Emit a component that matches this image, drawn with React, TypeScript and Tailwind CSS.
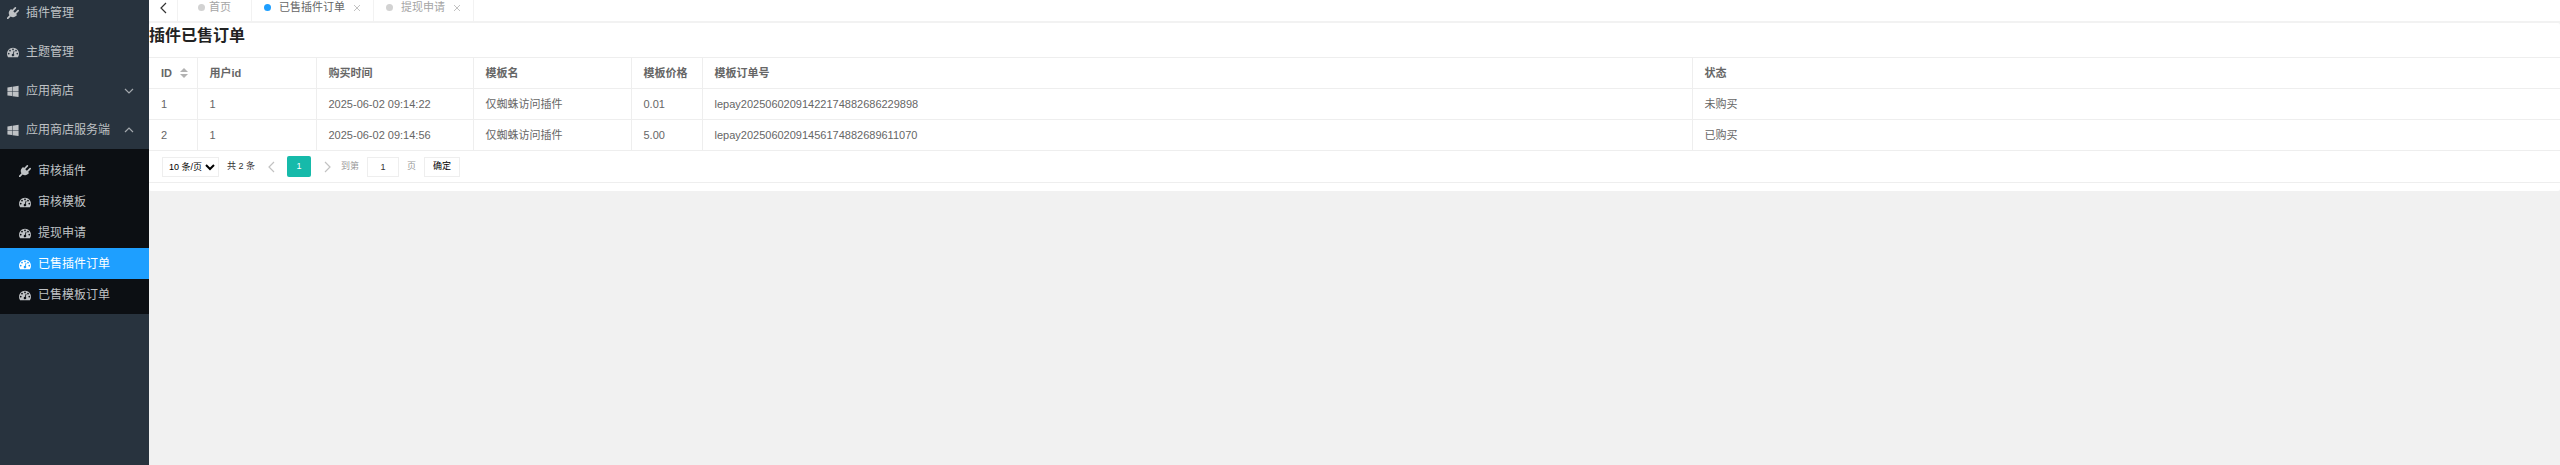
import { useState } from 'react';
import type { ReactNode } from 'react';

type IconName = 'plug' | 'gauge' | 'windows';

interface MenuItem {
  title: string;
  icon: IconName;
  arrow?: 'up' | 'down';
}

interface Order {
  id: number;
  userId: number;
  time: string;
  name: string;
  price: string;
  orderNo: string;
  status: string;
}

const MENU: MenuItem[] = [
  { title: '插件管理', icon: 'plug' },
  { title: '主题管理', icon: 'gauge' },
  { title: '应用商店', icon: 'windows', arrow: 'down' },
  { title: '应用商店服务端', icon: 'windows', arrow: 'up' },
];

const SUBMENU: MenuItem[] = [
  { title: '审核插件', icon: 'plug' },
  { title: '审核模板', icon: 'gauge' },
  { title: '提现申请', icon: 'gauge' },
  { title: '已售插件订单', icon: 'gauge' },
  { title: '已售模板订单', icon: 'gauge' },
];

const ORDERS: Order[] = [
  {
    id: 1,
    userId: 1,
    time: '2025-06-02 09:14:22',
    name: '仅蜘蛛访问插件',
    price: '0.01',
    orderNo: 'lepay20250602091422174882686229898',
    status: '未购买',
  },
  {
    id: 2,
    userId: 1,
    time: '2025-06-02 09:14:56',
    name: '仅蜘蛛访问插件',
    price: '5.00',
    orderNo: 'lepay20250602091456174882689611070',
    status: '已购买',
  },
];

// Font Awesome 4 shapes, drawn on the font's 1792 grid
function MenuIcon({ name }: { name: IconName }) {
  if (name === 'plug') {
    return (
      <svg viewBox="0 0 1792 1792" className="size-3 shrink-0" fill="currentColor" aria-hidden="true">
        <path d="M1755 453q37 38 37 90.500t-37 90.500l-401 400 150 150-160 160q-163 163-389.500 186.500t-411.500-100.500l-362 362h-181v-181l362-362q-124-185-100.500-411.500t186.500-389.500l160-160 150 150 400-401q38-37 91-37t90 37 37 90.500-37 90.500l-400 401 234 234 401-400q38-37 91-37t90 37z" />
      </svg>
    );
  }
  if (name === 'gauge') {
    return (
      <svg viewBox="0 0 1792 1792" className="size-3 shrink-0" fill="currentColor" aria-hidden="true">
        <path d="M384 1152q0-53-37.500-90.500t-90.500-37.500-90.500 37.500-37.500 90.500 37.500 90.500 90.500 37.500 90.500-37.500 37.500-90.500zm192-448q0-53-37.500-90.500t-90.500-37.500-90.500 37.500-37.500 90.500 37.500 90.500 90.500 37.500 90.500-37.500 37.500-90.500zm428 481l101-382q6-26-7.500-48.500t-38.500-29.500-48 6.500-30 39.500l-101 382q-60 5-107 43.500t-63 98.500q-20 77 20 146t117 89 146-20 89-117q16-60-6-117t-72-91zm660-33q0-53-37.500-90.500t-90.500-37.500-90.500 37.500-37.500 90.500 37.500 90.500 90.500 37.500 90.500-37.500 37.500-90.500zm-640-640q0-53-37.500-90.500t-90.500-37.500-90.500 37.500-37.500 90.500 37.500 90.500 90.500 37.500 90.500-37.500 37.500-90.500zm448 192q0-53-37.500-90.500t-90.500-37.500-90.500 37.500-37.500 90.500 37.500 90.500 90.500 37.500 90.500-37.500 37.500-90.500zm320 448q0 261-141 483-19 29-54 29h-1402q-35 0-54-29-141-221-141-483 0-182 71-348t191-286 286-191 348-71 348 71 286 191 191 286 71 348z" />
      </svg>
    );
  }
  return (
    <svg viewBox="0 0 1792 1792" className="size-3 shrink-0" fill="currentColor" aria-hidden="true">
      <path d="M746 1006v651l-682-94v-557h682zm0-743v659h-682v-565zm982 743v786l-907-125v-661h907zm0-878v794h-907v-669z" />
    </svg>
  );
}

function Chevron({ dir, className }: { dir: 'up' | 'down' | 'left' | 'right'; className: string }) {
  const points = {
    up: '2,8 6,4 10,8',
    down: '2,4 6,8 10,4',
    left: '9,1 4,6 9,11',
    right: '4,1 9,6 4,11',
  };
  return (
    <svg viewBox="0 0 12 12" className={className} fill="none" stroke="currentColor" strokeWidth="1.2" aria-hidden="true">
      <polyline points={points[dir]} />
    </svg>
  );
}

function Sidebar({ active, onSelect }: { active: string; onSelect: (title: string) => void }) {
  return (
    <aside className="w-[149px] shrink-0 overflow-hidden bg-[#28333e] text-[12px] text-[#bfc2c5]">
      <nav className="-mt-[7px]">
        {MENU.map((item) => (
          <a key={item.title} href="#" className="flex h-[39px] items-center gap-[7px] pl-[7px] pr-3.5">
            <MenuIcon name={item.icon} />
            <span className="flex-1 whitespace-nowrap">{item.title}</span>
            {item.arrow && <Chevron dir={item.arrow} className="size-3 shrink-0 text-[#a3a8ad]" />}
          </a>
        ))}
        <div className="bg-[#0c0f13] pt-1.5 pb-1">
          {SUBMENU.map((item) => (
            <a
              key={item.title}
              href="#"
              onClick={() => onSelect(item.title)}
              className={
                item.title === active
                  ? 'flex h-[31px] items-center gap-[7px] bg-[#1e9fff] pl-[19px] text-white'
                  : 'flex h-[31px] items-center gap-[7px] pl-[19px]'
              }
            >
              <MenuIcon name={item.icon} />
              <span className="whitespace-nowrap">{item.title}</span>
            </a>
          ))}
        </div>
      </nav>
    </aside>
  );
}

function Tab({ title, active, closable }: { title: string; active?: boolean; closable?: boolean }) {
  return (
    <div
      className={
        active
          ? 'flex items-center gap-2 border-r border-[#f2f2f2] px-3 text-[#666]'
          : 'flex items-center gap-2 border-r border-[#f2f2f2] px-3 text-[#a5a5a5]'
      }
    >
      <span className={active ? 'size-[7px] rounded-full bg-[#1e9fff]' : 'size-[7px] rounded-full bg-[#d2d2d2]'} />
      <span>{title}</span>
      {closable && (
        <button type="button" aria-label="关闭" className="text-[#c2c2c2]">
          <svg viewBox="0 0 8 8" className="size-2" stroke="currentColor" aria-hidden="true">
            <path d="M1 1l6 6M7 1l-6 6" />
          </svg>
        </button>
      )}
    </div>
  );
}

function TabBar() {
  return (
    <div className="overflow-hidden border-b-2 border-[#f2f2f2] bg-white">
      <div className="-mt-1.5 flex h-[27px] text-[11px]">
        <button
          type="button"
          aria-label="向左"
          className="flex w-[29px] items-center justify-center border-r border-[#f2f2f2] text-[#333]"
        >
          <Chevron dir="left" className="size-3" />
        </button>
        <div className="flex border-r border-[#f2f2f2] px-2">
          <div className="flex items-center gap-1 px-3 text-[#a5a5a5]">
            <span className="size-[7px] rounded-full bg-[#d2d2d2]" />
            <span>首页</span>
          </div>
        </div>
        <Tab title="已售插件订单" active closable />
        <Tab title="提现申请" closable />
      </div>
    </div>
  );
}

function Th({ className, children }: { className?: string; children: ReactNode }) {
  return <th className={`${className ?? ''} h-[31px] px-3 text-left font-bold`}>{children}</th>;
}

function OrderTable() {
  return (
    <table className="w-full table-fixed border-collapse text-[11px] text-[#666]">
      <thead>
        <tr className="border-y border-[#eee] divide-x divide-[#eee]">
          <Th className="w-12">
            <span className="flex items-center gap-2">
              ID
              <svg viewBox="0 0 8 10" className="h-[10px] w-2 shrink-0" fill="#b2b2b2" aria-hidden="true">
                <path d="M4 0l4 4H0zM4 10L0 6h8z" />
              </svg>
            </span>
          </Th>
          <Th className="w-[119px]">用户id</Th>
          <Th className="w-[157px]">购买时间</Th>
          <Th className="w-[158px]">模板名</Th>
          <Th className="w-[71px]">模板价格</Th>
          <Th>模板订单号</Th>
          <Th className="w-[36%]">状态</Th>
        </tr>
      </thead>
      <tbody>
        {ORDERS.map((o) => (
          <tr key={o.id} className="border-b border-[#eee] divide-x divide-[#eee]">
            {[o.id, o.userId, o.time, o.name, o.price, o.orderNo, o.status].map((v, i) => (
              <td key={i} className="h-[31px] px-3 whitespace-nowrap">
                {v}
              </td>
            ))}
          </tr>
        ))}
      </tbody>
    </table>
  );
}

function Pager() {
  const [page, setPage] = useState('1');
  return (
    <div className="flex h-8 items-center border-b border-[#eee] pl-[13px] text-[9px] text-[#333]">
      <select aria-label="每页条数" className="h-5 w-[57px] border border-[#eee] bg-white pl-0.5 text-black">
        <option>10 条/页</option>
        <option>20 条/页</option>
      </select>
      <span className="ml-2">共 2 条</span>
      <button type="button" aria-label="上一页" className="ml-2.5 text-[#c2c2c2]">
        <Chevron dir="left" className="size-3" />
      </button>
      <button type="button" className="mx-2.5 h-[21px] w-6 rounded-xs bg-[#16baaa] text-white">
        1
      </button>
      <button type="button" aria-label="下一页" className="text-[#c2c2c2]">
        <Chevron dir="right" className="size-3" />
      </button>
      <label className="ml-2 flex items-center gap-2 text-[#999]">
        到第
        <input
          value={page}
          onChange={(e) => setPage(e.target.value)}
          className="h-5 w-8 border border-[#eee] text-center text-[#333]"
        />
        页
      </label>
      <button type="button" className="ml-2 h-5 w-9 border border-[#eee] bg-white text-black">
        确定
      </button>
    </div>
  );
}

export default function App() {
  const [active, setActive] = useState('已售插件订单');
  return (
    <div className="flex min-h-screen bg-[#f1f1f1] font-['Liberation_Sans','Noto_Sans_CJK_SC',sans-serif]">
      <Sidebar active={active} onSelect={setActive} />
      <div className="min-w-0 flex-1">
        <TabBar />
        <main className="rounded-xs bg-white pb-2">
          <h1 className="flex h-[34px] items-center pb-2 text-[16px] font-bold text-[#222]">插件已售订单</h1>
          <OrderTable />
          <Pager />
        </main>
      </div>
    </div>
  );
}
